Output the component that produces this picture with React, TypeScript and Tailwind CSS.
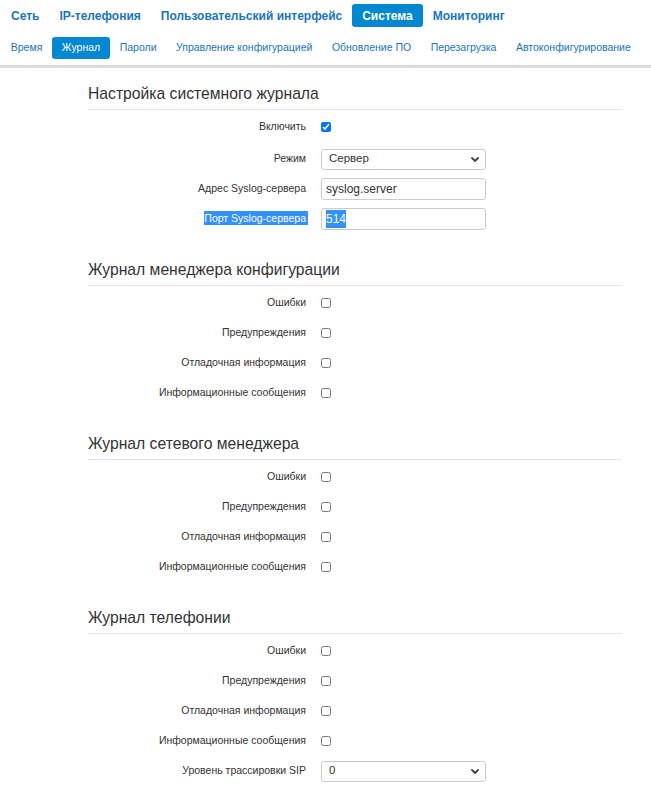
import type { ReactNode } from 'react'

const topNav = ['Сеть', 'IP-телефония', 'Пользовательский интерфейс', 'Система', 'Мониторинг']
const subNav = [
  'Время',
  'Журнал',
  'Пароли',
  'Управление конфигурацией',
  'Обновление ПО',
  'Перезагрузка',
  'Автоконфигурирование',
]
const levels = ['Ошибки', 'Предупреждения', 'Отладочная информация', 'Информационные сообщения']

const Chevron = () => (
  <svg
    className="pointer-events-none absolute right-[7px] top-[8px]"
    width="8"
    height="5"
    viewBox="0 0 8 5"
    fill="none"
  >
    <path d="M1 1l3 3 3-3" stroke="#444" strokeWidth="1.8" strokeLinecap="round" strokeLinejoin="round" />
  </svg>
)

const Select = ({ value }: { value: string }) => (
  <div className="relative w-[165px]">
    <select className="block h-[21px] w-full appearance-none rounded-[3px] border border-[#ccc] bg-white pl-[7px] text-[11.5px] text-[#333] outline-none">
      <option>{value}</option>
    </select>
    <Chevron />
  </div>
)

const Check = ({ checked = false }: { checked?: boolean }) => (
  <input type="checkbox" defaultChecked={checked} className="m-0 block h-[10px] w-[10px]" />
)

const Row = ({ label, children, className = '' }: { label: ReactNode; children: ReactNode; className?: string }) => (
  <div className={`flex h-[30px] items-center ${className}`}>
    <div className="w-[218px] text-right text-[10.5px] text-[#333]">{label}</div>
    <div className="ml-[15px] flex items-center">{children}</div>
  </div>
)

const Heading = ({ title, className = '' }: { title: string; className?: string }) => (
  <h2 className={`mb-[2px] border-b border-[#e5e5e5] pb-[5px] text-[15.7px] leading-[20px] font-normal text-[#333] ${className}`}>
    {title}
  </h2>
)

const LevelRows = () => (
  <>
    {levels.map((l) => (
      <Row key={l} label={l}>
        <Check />
      </Row>
    ))}
  </>
)

export default function App() {
  return (
    <div className="min-h-[793px] w-[651px] bg-white pb-[10px] font-['Liberation_Sans',Arial,sans-serif]">
      <nav className="flex pt-[4px] pl-px">
        {topNav.map((item) => (
          <a
            key={item}
            href="#"
            className={`flex h-[23px] items-center whitespace-nowrap rounded-[3px] px-[10px] text-[12px] font-bold ${
              item === 'Система' ? 'bg-[#0288d1] text-white' : 'text-[#1b75bb]'
            }`}
          >
            {item}
          </a>
        ))}
      </nav>

      <nav className="mt-[10px] flex pl-px">
        {subNav.map((item) => (
          <a
            key={item}
            href="#"
            className={`flex h-[22px] items-center whitespace-nowrap rounded-[3px] px-[9.75px] text-[10.5px] ${
              item === 'Журнал' ? 'bg-[#0288d1] text-white' : 'text-[#1b75bb]'
            }`}
          >
            {item}
          </a>
        ))}
      </nav>

      <div className="mt-[6px] h-[3px] bg-[#dcdcdc]" />

      <main className="ml-[88px] w-[534px]">
        <Heading title="Настройка системного журнала" className="mt-[16px]" />
        <Row label="Включить">
          <Check checked />
        </Row>
        <Row label="Режим" className="mt-[2px]">
          <Select value="Сервер" />
        </Row>
        <Row label="Адрес Syslog-сервера">
          <input
            defaultValue="syslog.server"
            className="block h-[22px] w-[165px] rounded-[3px] border border-[#ccc] bg-white pl-[4px] text-[12px] text-[#333] outline-none"
          />
        </Row>
        <Row
          label={<span className="-mr-[2px] bg-[#3390ff] py-px pr-[2px] text-white">Порт Syslog-сервера</span>}
        >
          <div className="flex h-[22px] w-[165px] items-center rounded-[3px] border border-[#ccc] bg-white pl-[4px] text-[12px]">
            <span className="bg-[#3390ff] text-white">514</span>
          </div>
        </Row>

        <Heading title="Журнал менеджера конфигурации" className="mt-[26px]" />
        <LevelRows />

        <Heading title="Журнал сетевого менеджера" className="mt-[26px]" />
        <LevelRows />

        <Heading title="Журнал телефонии" className="mt-[26px]" />
        <LevelRows />
        <Row label="Уровень трассировки SIP">
          <Select value="0" />
        </Row>
      </main>
    </div>
  )
}
